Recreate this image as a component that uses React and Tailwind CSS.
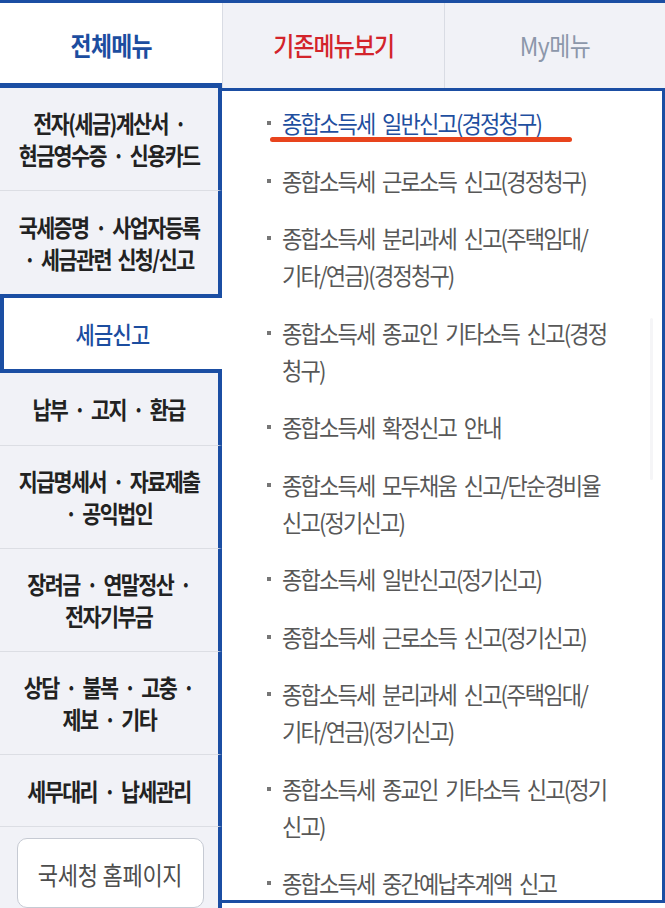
const leftMenu = [
  { lines: ["전자(세금)계산서 ·", "현금영수증 · 신용카드"], h: "h-[106px] border-b" },
  { lines: ["국세증명 · 사업자등록", "· 세금관련 신청/신고"], h: "h-[106px]" },
  { lines: ["세금신고"], active: true },
  { lines: ["납부 · 고지 · 환급"], h: "h-[75px] border-b" },
  { lines: ["지급명세서 · 자료제출", "· 공익법인"], h: "h-[106px] border-b" },
  { lines: ["장려금 · 연말정산 ·", "전자기부금"], h: "h-[106px] border-b" },
  { lines: ["상담 · 불복 · 고충 ·", "제보 · 기타"], h: "h-[106px] border-b" },
  { lines: ["세무대리 · 납세관리"], h: "h-[74px] border-b" },
];

const subMenu = [
  ["종합소득세 일반신고(경정청구)"],
  ["종합소득세 근로소득 신고(경정청구)"],
  ["종합소득세 분리과세 신고(주택임대/", "기타/연금)(경정청구)"],
  ["종합소득세 종교인 기타소득 신고(경정", "청구)"],
  ["종합소득세 확정신고 안내"],
  ["종합소득세 모두채움 신고/단순경비율", "신고(정기신고)"],
  ["종합소득세 일반신고(정기신고)"],
  ["종합소득세 근로소득 신고(정기신고)"],
  ["종합소득세 분리과세 신고(주택임대/", "기타/연금)(정기신고)"],
  ["종합소득세 종교인 기타소득 신고(정기", "신고)"],
  ["종합소득세 중간예납추계액 신고"],
];

function LeftItem({ item }) {
  if (item.active) {
    return (
      <div className="flex h-[81px] w-[222px] items-center justify-center border-y-4 border-l-4 border-[#1b4ea3] bg-white">
        <span className="scale-x-[0.87] whitespace-nowrap text-[24px] font-medium tracking-[-0.8px] text-[#1c4d9f]">
          {item.lines[0]}
        </span>
      </div>
    );
  }
  return (
    <div className={`flex w-[222px] flex-col items-center justify-center border-r-4 border-r-[#1b4ea3] border-b-[#dcdee4] bg-[#f1f2f7] ${item.h}`}>
      {item.lines.map((line) => (
        <p
          key={line}
          className="scale-x-[0.86] whitespace-nowrap text-[24px] font-semibold leading-[32px] tracking-[-1.8px] text-[#222] [word-spacing:4px]"
        >
          {line}
        </p>
      ))}
    </div>
  );
}

export default function App() {
  return (
    <div className="h-[908px] w-[665px] overflow-hidden bg-white font-['Noto_Sans_CJK_KR','Noto_Sans',sans-serif]">
      <div className="h-[3px] bg-[#1b4ea3]" />

      <div className="flex h-[85px]">
        <div className="flex w-[222px] items-center justify-center border-b-[5px] border-[#1b4ea3] bg-white pt-[2px]">
          <span className="scale-x-[0.88] text-[26px] font-semibold tracking-[-0.8px] text-[#1c4d9f]">전체메뉴</span>
        </div>
        <div className="flex w-[222px] items-center justify-center border-l border-[#d9dce4] bg-[#f1f2f7] pb-[2px]">
          <span className="scale-x-[0.88] text-[26px] font-medium tracking-[-1px] text-[#d3242b]">기존메뉴보기</span>
        </div>
        <div className="flex flex-1 items-center justify-center border-l border-[#d9dce4] bg-[#f1f2f7] pb-[2px]">
          <span className="scale-x-[0.88] text-[26px] tracking-[-0.6px] text-[#8c97aa]">My메뉴</span>
        </div>
      </div>

      <div className="flex items-start">
        <div className="flex h-[820px] w-[222px] flex-col">
          {leftMenu.map((item) => (
            <LeftItem key={item.lines[0]} item={item} />
          ))}
          <div className="flex-1 border-r-4 border-[#1b4ea3] bg-[#f1f2f7] pl-[17px] pt-[11px]">
            <div className="flex h-[70px] w-[187px] items-center justify-center rounded-[10px] border border-[#c6cad3] bg-white pt-[4px]">
              <span className="scale-x-[0.88] whitespace-nowrap text-[25px] tracking-[-0.3px] text-[#4d4d4d]">국세청 홈페이지</span>
            </div>
          </div>
        </div>

        <div className="relative h-[815px] flex-1 overflow-hidden border-y-[3px] border-r-[3px] border-[#1b4ea3] bg-white pl-[45px] pt-[13px]">
          <div className="absolute right-[9px] top-[227px] h-[162px] w-[3px] rounded-full bg-[#f5f5f7]" />
          <div className="flex flex-col gap-[20.5px]">
            {subMenu.map((lines, i) => (
              <div key={lines.join()} className="relative flex items-start">
                <span className="mt-[17px] h-[4px] w-[4px] shrink-0 bg-[#767676]" />
                <div className="ml-[11px] origin-left scale-x-[0.92]">
                  {lines.map((line) => (
                    <p
                      key={line}
                      className={`whitespace-nowrap text-[24px] leading-[37px] tracking-[-2px] [word-spacing:5px] ${i === 0 ? "text-[#1f4fa0]" : "text-[#585858]"}`}
                    >
                      {line}
                    </p>
                  ))}
                </div>
                {i === 0 && (
                  <div className="absolute left-[3px] top-[33px] h-[5px] w-[302px] rounded-full bg-[#e8441d]" />
                )}
              </div>
            ))}
          </div>
        </div>
      </div>
    </div>
  );
}
